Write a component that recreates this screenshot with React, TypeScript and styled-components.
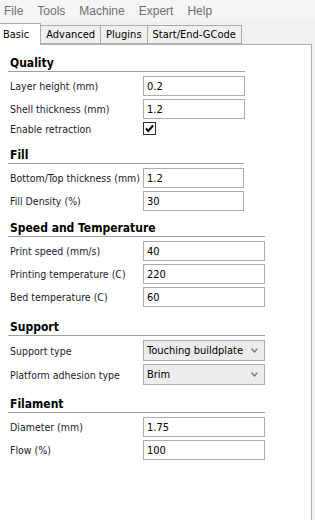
import styled, { createGlobalStyle } from "styled-components";

const GlobalStyle = createGlobalStyle`
  html, body {
    margin: 0;
    padding: 0;
    background: #f0f0f0;
  }
  body {
    font-family: "DejaVu Sans Condensed", "Liberation Sans", sans-serif;
    font-size: 11px;
    color: #111;
  }
`;

const Window = styled.div`
  width: 315px;
  height: 520px;
  display: flex;
  flex-direction: column;
  background: #f0f0f0;
  overflow: hidden;
`;

const MenuBar = styled.div`
  height: 21px;
  display: flex;
  align-items: center;
  gap: 14px;
  padding-left: 4px;
  font-family: "Liberation Sans", sans-serif;
  font-size: 12px;
  color: #707070;
  background: #f5f5f5;
`;

const TabStrip = styled.div`
  height: 22px;
  display: flex;
  align-items: flex-end;
  padding-top: 1px;
  position: relative;
  z-index: 1;
`;

const Tab = styled.div<{ $active?: boolean }>`
  height: ${(p) => (p.$active ? "21px" : "17px")};
  margin-bottom: ${(p) => (p.$active ? "-1px" : "0")};
  padding: ${(p) => (p.$active ? "0 11px 0 3px" : "0 5px")};
  display: flex;
  align-items: center;
  background: ${(p) => (p.$active ? "#fff" : "#f0f0f0")};
  border: 1px solid #adadad;
  border-bottom: ${(p) => (p.$active ? "none" : "1px solid #adadad")};
  border-left: ${(p) => (p.$active ? "none" : "1px solid #adadad")};
  margin-left: -1px;
  color: #000;
  &:first-child {
    margin-left: 0;
  }
`;

const Panel = styled.div`
  flex: 1;
  width: 312px;
  box-sizing: border-box;
  background: #fff;
  border-top: 1px solid #adadad;
  border-right: 1px solid #adadad;
  padding: 10px 0 0 8px;
  display: flex;
  flex-direction: column;
`;

const Section = styled.div<{ $width: number; $space: number }>`
  width: ${(p) => p.$width}px;
  margin-top: ${(p) => p.$space}px;
  display: flex;
  flex-direction: column;
`;

const Heading = styled.div`
  height: 16px;
  line-height: 16px;
  padding-left: 2px;
  font-size: 12px;
  font-weight: bold;
  color: #000;
  border-bottom: 1px solid #a0a0a0;
  margin-bottom: 4px;
`;

const Rows = styled.div`
  display: flex;
  flex-direction: column;
  gap: 3px;
`;

const Row = styled.div`
  display: grid;
  grid-template-columns: 135px 1fr;
  align-items: center;
`;

const Label = styled.span`
  padding-left: 2px;
  font-size: 10.5px;
  color: #1b1b2e;
  white-space: nowrap;
`;

const TextBox = styled.div`
  height: 20px;
  box-sizing: border-box;
  border: 1px solid #acacac;
  background: #fff;
  padding-left: 3px;
  display: flex;
  align-items: center;
  color: #000;
`;

const Select = styled.div`
  height: 21px;
  box-sizing: border-box;
  border: 1px solid #acacac;
  background: #ececec;
  padding: 0 6px 0 3px;
  display: flex;
  align-items: center;
  justify-content: space-between;
  color: #000;
`;

const CheckBox = styled.div`
  width: 13px;
  height: 13px;
  box-sizing: border-box;
  border: 1px solid #333;
  background: #fff;
  display: flex;
  align-items: center;
  justify-content: center;
`;

const Chevron = () => (
  <svg width="7" height="5" viewBox="0 0 7 5">
    <path d="M0.5 0.5 L3.5 4 L6.5 0.5" fill="none" stroke="#777" strokeWidth="1.3" />
  </svg>
);

const Check = () => (
  <svg width="9" height="9" viewBox="0 0 9 9">
    <path d="M1 4.5 L3.3 7 L8 1.5" fill="none" stroke="#000" strokeWidth="2" />
  </svg>
);

type Field =
  | { label: string; kind: "text"; value: string }
  | { label: string; kind: "select"; value: string }
  | { label: string; kind: "check"; value: boolean };

const sections: { title: string; width: number; space: number; fields: Field[] }[] = [
  {
    title: "Quality",
    width: 237,
    space: 0,
    fields: [
      { label: "Layer height (mm)", kind: "text", value: "0.2" },
      { label: "Shell thickness (mm)", kind: "text", value: "1.2" },
      { label: "Enable retraction", kind: "check", value: true },
    ],
  },
  {
    title: "Fill",
    width: 236,
    space: 12,
    fields: [
      { label: "Bottom/Top thickness (mm)", kind: "text", value: "1.2" },
      { label: "Fill Density (%)", kind: "text", value: "30" },
    ],
  },
  {
    title: "Speed and Temperature",
    width: 257,
    space: 9,
    fields: [
      { label: "Print speed (mm/s)", kind: "text", value: "40" },
      { label: "Printing temperature (C)", kind: "text", value: "220" },
      { label: "Bed temperature (C)", kind: "text", value: "60" },
    ],
  },
  {
    title: "Support",
    width: 257,
    space: 12,
    fields: [
      { label: "Support type", kind: "select", value: "Touching buildplate" },
      { label: "Platform adhesion type", kind: "select", value: "Brim" },
    ],
  },
  {
    title: "Filament",
    width: 257,
    space: 11,
    fields: [
      { label: "Diameter (mm)", kind: "text", value: "1.75" },
      { label: "Flow (%)", kind: "text", value: "100" },
    ],
  },
];

export default function App() {
  const renderControl = (f: Field) => {
    if (f.kind === "check") {
      return <CheckBox>{f.value && <Check />}</CheckBox>;
    }
    if (f.kind === "select") {
      return (
        <Select>
          <span>{f.value}</span>
          <Chevron />
        </Select>
      );
    }
    return <TextBox>{f.value}</TextBox>;
  };

  return (
    <Window>
      <GlobalStyle />
      <MenuBar>
        <span>File</span>
        <span>Tools</span>
        <span>Machine</span>
        <span>Expert</span>
        <span>Help</span>
      </MenuBar>
      <TabStrip>
        <Tab $active>Basic</Tab>
        <Tab>Advanced</Tab>
        <Tab>Plugins</Tab>
        <Tab>Start/End-GCode</Tab>
      </TabStrip>
      <Panel>
        {sections.map((s) => (
          <Section key={s.title} $width={s.width} $space={s.space}>
            <Heading>{s.title}</Heading>
            <Rows>
              {s.fields.map((f) => (
                <Row key={f.label}>
                  <Label>{f.label}</Label>
                  {renderControl(f)}
                </Row>
              ))}
            </Rows>
          </Section>
        ))}
      </Panel>
    </Window>
  );
}
